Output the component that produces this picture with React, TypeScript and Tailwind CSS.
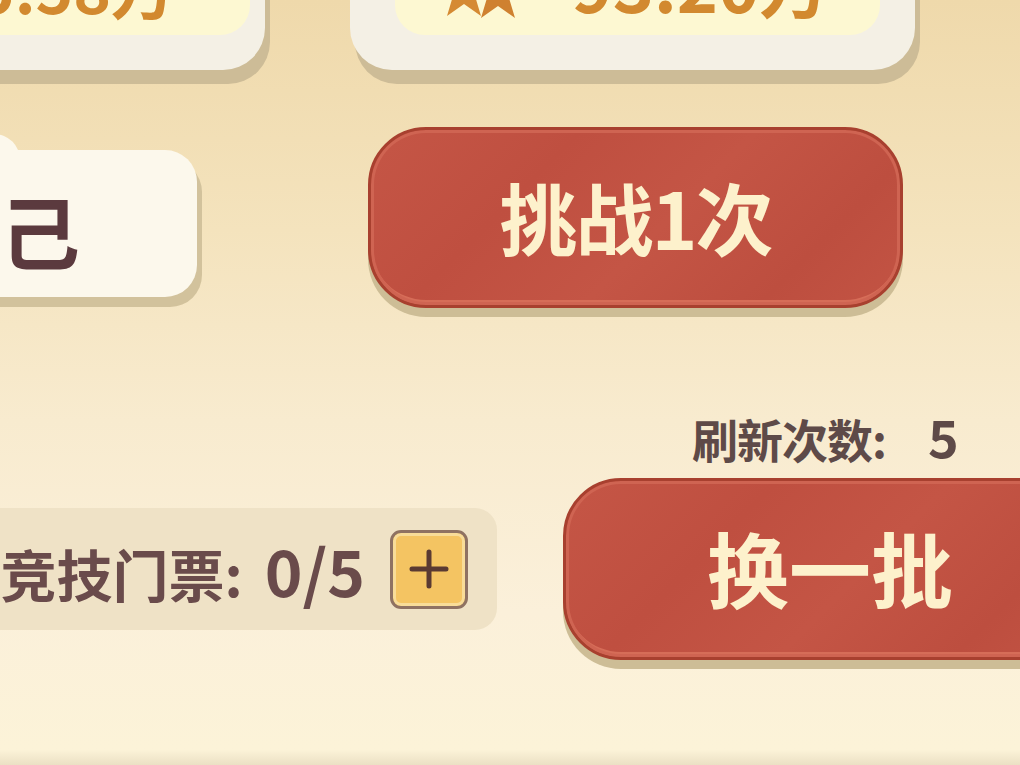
import React from "react";

const redBtn =
  "flex shrink-0 items-center justify-center rounded-[58px] border-[3px] border-[#a8402f] bg-[#c25343] bg-[linear-gradient(135deg,#c55646_0%,#bf4f40_30%,#c45545_55%,#bd4e3f_80%,#c35444_100%)] shadow-[inset_0_0_0_3px_#cf6452,inset_0_-5px_0_#d66d58,0_9px_0_#cdbd96]";

function Stars() {
  return (
    <svg width="92" height="60" viewBox="0 0 92 60" className="shrink-0">
      <polygon
        points="28,2 35,20 54,20 39,32 45,52 28,40 11,52 17,32 2,20 21,20"
        fill="#d58a33"
      />
      <polygon
        points="62,4 69,22 88,22 73,34 79,54 62,42 45,54 51,34 36,22 55,22"
        fill="#cf8130"
      />
    </svg>
  );
}

export default function App() {
  return (
    <div className="relative h-[765px] w-[1020px] overflow-hidden bg-[linear-gradient(180deg,#efd9ab_0%,#f4e3bd_30%,#f8ebcf_55%,#fbf0da_80%,#fcf3d8_98%,#ebe0c4_100%)] font-['Noto_Sans_CJK_SC','Noto_Sans',sans-serif]">
      {/* top cards */}
      <div className="mt-[-70px] flex items-start">
        <div className="ml-[-150px] flex h-[140px] w-[415px] shrink-0 justify-end rounded-b-[42px] bg-[#f4f0e5] px-[15px] shadow-[5px_14px_0_#cdbc97]">
          <div className="flex h-[105px] w-full items-end justify-end rounded-b-[30px] bg-[#fdf8d2] pb-[17px] pr-[75px]">
            <span className="text-[64px] font-bold leading-none text-[#d2892f]">5.58万</span>
          </div>
        </div>
        <div className="ml-[85px] flex h-[140px] w-[565px] shrink-0 rounded-b-[42px] bg-[#f4f0e5] pl-[45px] pr-[35px] shadow-[5px_14px_0_#cdbc97]">
          <div className="flex h-[105px] w-full items-end justify-center gap-[44px] rounded-b-[30px] bg-[#fdf8d2] pb-[17px] pr-[10px]">
            <div className="mb-[-6px]">
              <Stars />
            </div>
            <span className="text-[70px] font-bold leading-none text-[#d2892f]">93.20万</span>
          </div>
        </div>
      </div>

      {/* middle row */}
      <div className="mt-[57px] flex items-start">
        <div className="relative ml-[-120px] mt-[23px] flex h-[147px] w-[317px] shrink-0 items-center rounded-[32px] bg-[#fcf8ec] pl-[40px] shadow-[5px_10px_0_#d2c29c]">
          <div className="absolute left-[100px] top-[-16px] h-[34px] w-[40px] rounded-tl-[6px] rounded-tr-[26px] bg-[#fcf8ec]" />
          <span className="relative mt-[8px] text-[80px] font-bold leading-none text-[#5b3a3e]">自己</span>
        </div>
        <div className={`ml-[171px] h-[181px] w-[535px] ${redBtn}`}>
          <span className="mt-[-4px] text-[78px] font-bold leading-none tracking-[-2px] text-[#fdf1cc]">挑战1次</span>
        </div>
      </div>

      {/* refresh label */}
      <div className="ml-[692px] mt-[106px] flex items-baseline text-[#5e4a48]">
        <span className="text-[46px] font-bold leading-[44px] tracking-[-1px]">刷新次数:</span>
        <span className="ml-[42px] text-[52px] font-bold leading-[44px]">5</span>
      </div>

      {/* bottom row */}
      <div className="mt-[18px] flex items-start">
        <div className="ml-[-100px] mt-[30px] flex h-[122px] w-[597px] shrink-0 items-center justify-end gap-[25px] rounded-[22px] bg-[#efe2c6] pr-[29px]">
          <span className="flex items-baseline leading-none text-[#6a4b4b]">
            <span className="text-[56px] font-bold">竞技门票:</span>
            <span className="ml-[22px] text-[64px] font-bold">0/5</span>
          </span>
          <div className="flex h-[79px] w-[78px] shrink-0 items-center justify-center rounded-[11px] border-[3px] border-[#8f7262] bg-[#f4c462] shadow-[inset_0_0_0_3px_#f8dc98]">
            <svg width="40" height="40" viewBox="0 0 40 40">
              <path d="M20 3 V37 M3 20 H37" stroke="#5a3a32" strokeWidth="5" strokeLinecap="round" />
            </svg>
          </div>
        </div>
        <div className={`ml-[66px] h-[182px] w-[534px] ${redBtn}`}>
          <span className="mt-[-4px] text-[82px] font-bold leading-none text-[#fdf1cc]">换一批</span>
        </div>
      </div>
    </div>
  );
}
